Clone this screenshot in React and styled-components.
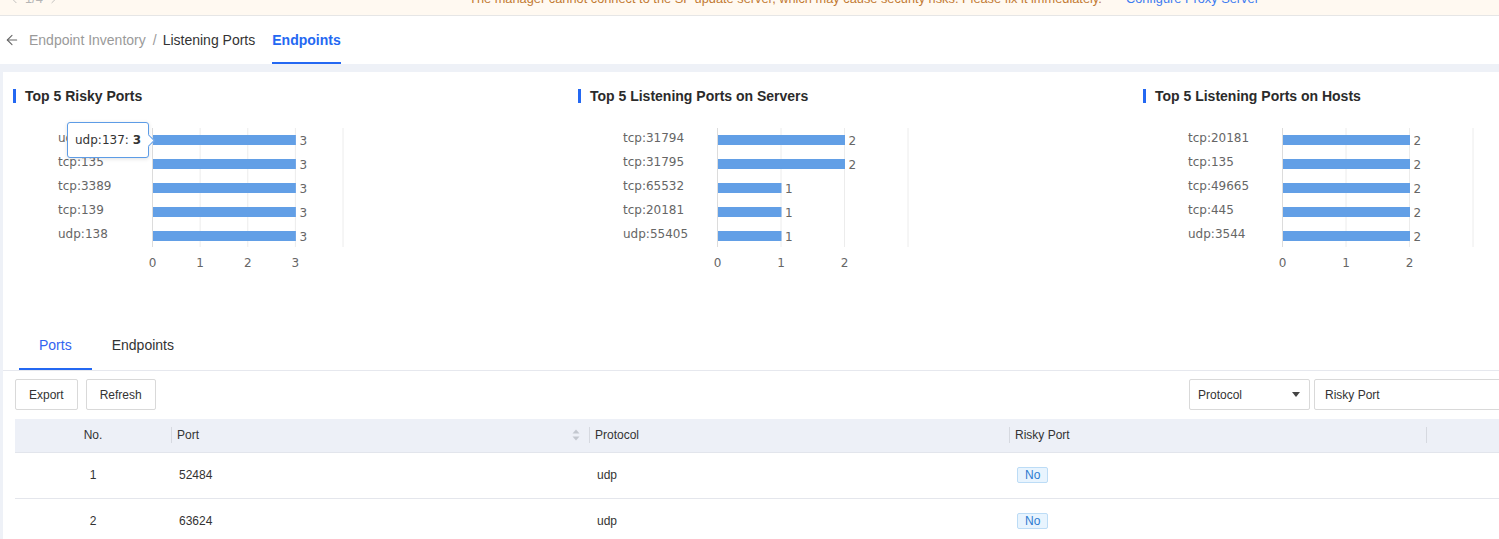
import React from "react";
import styled, { createGlobalStyle } from "styled-components";
import { ArrowLeft, ChevronLeft, ChevronRight } from "lucide-react";

const GlobalStyle = createGlobalStyle`
  * { box-sizing: border-box; }
  html, body { margin: 0; padding: 0; background: #fff; overflow: hidden; }
  body { font-family: "Liberation Sans", Arial, sans-serif; color: #333; }
`;

const Page = styled.div`
  width: 1720px;
  display: flex;
  flex-direction: column;
`;

const Banner = styled.div`
  height: 16px;
  background: #fff9f1;
  border-bottom: 1px solid #e6e6e6;
  display: grid;
  grid-template-columns: 1fr auto 1fr;
  grid-template-rows: 20px;
  align-content: end;
  align-items: center;
  padding: 0 0 6px 8px;
  overflow: hidden;
  font-size: 12.8px;
  line-height: 20px;
`;

const Pager = styled.div`
  display: flex;
  align-items: center;
  gap: 4px;
  color: #b5b5b5;
`;

const Notice = styled.div`
  display: flex;
  gap: 24px;
  color: #c27a33;
`;

const NoticeLink = styled.span`
  color: #3d7bf0;
`;

const NavBar = styled.div`
  height: 48px;
  display: flex;
  align-items: stretch;
  padding-left: 4px;
  background: #fff;
  font-size: 14px;
`;

const BackIcon = styled.div`
  display: flex;
  align-items: center;
  color: #666;
  margin-right: 9px;
`;

const Crumb = styled.div`
  display: flex;
  align-items: center;
  color: ${(p) => (p.$muted ? "#9a9a9a" : "#333")};
`;

const CrumbSep = styled.span`
  color: #9a9a9a;
  margin: 0 6px 0 7px;
`;

const NavTab = styled.div`
  display: flex;
  align-items: center;
  margin-left: 17px;
  padding-top: 2px;
  font-weight: bold;
  color: #2468f2;
  border-bottom: 2px solid #2468f2;
`;

const Body = styled.div`
  background: #eef1f7;
  padding: 8px 0 0 3px;
`;

const Panel = styled.div`
  background: #fff;
  min-height: 480px;
`;

const ChartsRow = styled.div`
  display: flex;
  padding: 17px 0 0 10px;
`;

const ChartCard = styled.div`
  position: relative;
  flex: 0 0 565px;
`;

const ChartTitle = styled.div`
  height: 14px;
  line-height: 14px;
  border-left: 3px solid #2468f2;
  padding-left: 9px;
  font-size: 14px;
  font-weight: bold;
  color: #2b2b2b;
`;

const ChartSvg = styled.svg`
  display: block;
  margin-top: 9px;
  font-family: "DejaVu Sans", sans-serif;
  font-size: 12px;
`;

const Tooltip = styled.div`
  position: absolute;
  left: 54px;
  top: 33px;
  width: 82px;
  height: 36px;
  padding: 0 7px;
  background: #fff;
  border: 1px solid #5d9ce6;
  border-radius: 3px;
  box-shadow: 0 1px 4px rgba(0, 0, 0, 0.12);
  font-family: "DejaVu Sans", sans-serif;
  font-size: 12px;
  line-height: 34px;
  color: #333;
  white-space: nowrap;

  &::after {
    content: "";
    position: absolute;
    right: -5px;
    top: 13px;
    width: 8px;
    height: 8px;
    background: #fff;
    border-top: 1px solid #5d9ce6;
    border-right: 1px solid #5d9ce6;
    transform: rotate(45deg);
  }

  b { font-weight: bold; }
`;

const TabBar = styled.div`
  display: flex;
  padding-left: 16px;
  border-bottom: 1px solid #e6e8ee;
`;

const Tab = styled.div`
  height: 48px;
  line-height: 46px;
  padding: 0 20px;
  font-size: 14px;
  color: ${(p) => (p.$active ? "#3264f0" : "#333")};
  border-bottom: 2px solid ${(p) => (p.$active ? "#2468f2" : "transparent")};
`;

const Toolbar = styled.div`
  display: flex;
  justify-content: space-between;
  margin-top: 8px;
  padding: 0 12px;
`;

const Group = styled.div`
  display: flex;
  gap: ${(p) => p.$gap}px;
`;

const Button = styled.button`
  height: 31px;
  padding: 0 13px;
  border: 1px solid #d9d9d9;
  border-radius: 2px;
  background: #fff;
  font-family: "Liberation Sans", Arial, sans-serif;
  font-size: 12px;
  color: #333;
`;

const Select = styled.div`
  width: 121px;
  height: 31px;
  display: flex;
  align-items: center;
  justify-content: space-between;
  padding: 0 9px 0 8px;
  border: 1px solid #d9d9d9;
  border-radius: 2px;
  font-size: 12px;
  color: #333;
`;

const Caret = styled.span`
  width: 0;
  height: 0;
  border-left: 4px solid transparent;
  border-right: 4px solid transparent;
  border-top: 5px solid #444;
`;

const SearchInput = styled.div`
  width: 394px;
  height: 31px;
  display: flex;
  align-items: center;
  padding-left: 10px;
  border: 1px solid #d9d9d9;
  border-radius: 2px;
  font-size: 12px;
  color: #333;
`;

const Table = styled.table`
  margin: 9px 12px 0;
  width: calc(100% - 24px);
  border-collapse: collapse;
  table-layout: fixed;
  font-size: 12px;
  color: #333;
`;

const Th = styled.th`
  height: 33px;
  padding: 0;
  background: #edf0f7;
  border-bottom: 1px solid #e2e5ec;
  font-weight: normal;
  text-align: ${(p) => (p.$center ? "center" : "left")};
`;

const HeadCell = styled.div`
  display: flex;
  align-items: center;
  justify-content: space-between;
  height: 16px;
  padding: 0 9px 0 5px;
  border-left: 1px solid #d6d9e0;
`;

const Td = styled.td`
  height: 46px;
  padding: 0 0 0 ${(p) => (p.$center ? 0 : 8)}px;
  border-bottom: 1px solid #e4e6ec;
  text-align: ${(p) => (p.$center ? "center" : "left")};
`;

const Tag = styled.span`
  display: inline-block;
  height: 16px;
  line-height: 14px;
  padding: 0 7px;
  border: 1px solid #bcdcf6;
  border-radius: 2px;
  background: #e8f4fe;
  color: #2d7bd0;
`;

const SortIcon = () => (
  <svg width="8" height="12" viewBox="0 0 8 12">
    <path d="M4 0.5 L7.5 4.5 H0.5 Z" fill="#c3c7cf" />
    <path d="M4 11.5 L7.5 7.5 H0.5 Z" fill="#c3c7cf" />
  </svg>
);

const BarChart = ({ data, max }) => {
  const x0 = 139.5;
  const x1 = 330;
  const step = (x1 - x0) / max;
  const grid = Array.from({ length: max }, (_, i) => i + 1);
  const ticks = Array.from({ length: max }, (_, i) => i);
  return (
    <ChartSvg width="565" height="210">
      {grid.map((i) => (
        <line key={i} x1={x0 + i * step} x2={x0 + i * step} y1="16" y2="135" stroke="#ececec" />
      ))}
      <line x1={x0} x2={x0} y1="16" y2="135" stroke="#dcdcdc" />
      {data.map((d, i) => {
        const cy = 28 + i * 24;
        const w = d.value * step;
        return (
          <g key={d.label}>
            <text x="45" y={cy - 2.5} dominantBaseline="central" fill="#666">
              {d.label}
            </text>
            <rect x={x0 + 0.5} y={cy - 5} width={w} height="10" fill="#629fe6" />
            <text x={x0 + w + 4} y={cy + 1} dominantBaseline="central" fill="#666">
              {d.value}
            </text>
          </g>
        );
      })}
      {ticks.map((t) => (
        <text key={t} x={x0 + t * step} y="151" textAnchor="middle" dominantBaseline="central" fill="#666">
          {t}
        </text>
      ))}
    </ChartSvg>
  );
};

const charts = [
  {
    title: "Top 5 Risky Ports",
    max: 4,
    data: [
      { label: "udp:137", value: 3 },
      { label: "tcp:135", value: 3 },
      { label: "tcp:3389", value: 3 },
      { label: "tcp:139", value: 3 },
      { label: "udp:138", value: 3 },
    ],
  },
  {
    title: "Top 5 Listening Ports on Servers",
    max: 3,
    data: [
      { label: "tcp:31794", value: 2 },
      { label: "tcp:31795", value: 2 },
      { label: "tcp:65532", value: 1 },
      { label: "tcp:20181", value: 1 },
      { label: "udp:55405", value: 1 },
    ],
  },
  {
    title: "Top 5 Listening Ports on Hosts",
    max: 3,
    data: [
      { label: "tcp:20181", value: 2 },
      { label: "tcp:135", value: 2 },
      { label: "tcp:49665", value: 2 },
      { label: "tcp:445", value: 2 },
      { label: "udp:3544", value: 2 },
    ],
  },
];

const rows = [
  { no: 1, port: "52484", protocol: "udp", risky: "No" },
  { no: 2, port: "63624", protocol: "udp", risky: "No" },
];

const App = () => {
  return (
    <Page>
      <GlobalStyle />
      <Banner>
        <Pager>
          <ChevronLeft size={13} strokeWidth={1.5} />
          <span>1/4</span>
          <ChevronRight size={13} strokeWidth={1.5} />
        </Pager>
        <Notice>
          <span>
            The manager cannot connect to the SF update server, which may cause security risks. Please fix it
            immediately.
          </span>
          <NoticeLink>Configure Proxy Server</NoticeLink>
        </Notice>
        <div />
      </Banner>

      <NavBar>
        <BackIcon>
          <ArrowLeft size={16} strokeWidth={1.6} />
        </BackIcon>
        <Crumb $muted>Endpoint Inventory</Crumb>
        <Crumb>
          <CrumbSep>/</CrumbSep>Listening Ports
        </Crumb>
        <NavTab>Endpoints</NavTab>
      </NavBar>

      <Body>
        <Panel>
          <ChartsRow>
            {charts.map((c, i) => (
              <ChartCard key={c.title}>
                <ChartTitle>{c.title}</ChartTitle>
                <BarChart data={c.data} max={c.max} />
                {i === 0 && (
                  <Tooltip>
                    udp:137: <b>3</b>
                  </Tooltip>
                )}
              </ChartCard>
            ))}
          </ChartsRow>

          <TabBar>
            <Tab $active>Ports</Tab>
            <Tab>Endpoints</Tab>
          </TabBar>

          <Toolbar>
            <Group $gap={8}>
              <Button>Export</Button>
              <Button>Refresh</Button>
            </Group>
            <Group $gap={4}>
              <Select>
                <span>Protocol</span>
                <Caret />
              </Select>
              <SearchInput>Risky Port</SearchInput>
            </Group>
          </Toolbar>

          <Table>
            <colgroup>
              <col style={{ width: 156 }} />
              <col style={{ width: 418 }} />
              <col style={{ width: 420 }} />
              <col style={{ width: 417 }} />
              <col />
            </colgroup>
            <thead>
              <tr>
                <Th $center>No.</Th>
                <Th>
                  <HeadCell>
                    <span>Port</span>
                    <SortIcon />
                  </HeadCell>
                </Th>
                <Th>
                  <HeadCell>Protocol</HeadCell>
                </Th>
                <Th>
                  <HeadCell>Risky Port</HeadCell>
                </Th>
                <Th>
                  <HeadCell />
                </Th>
              </tr>
            </thead>
            <tbody>
              {rows.map((r) => (
                <tr key={r.no}>
                  <Td $center>{r.no}</Td>
                  <Td>{r.port}</Td>
                  <Td>{r.protocol}</Td>
                  <Td>
                    <Tag>{r.risky}</Tag>
                  </Td>
                  <Td />
                </tr>
              ))}
            </tbody>
          </Table>
        </Panel>
      </Body>
    </Page>
  );
};

export default App;
